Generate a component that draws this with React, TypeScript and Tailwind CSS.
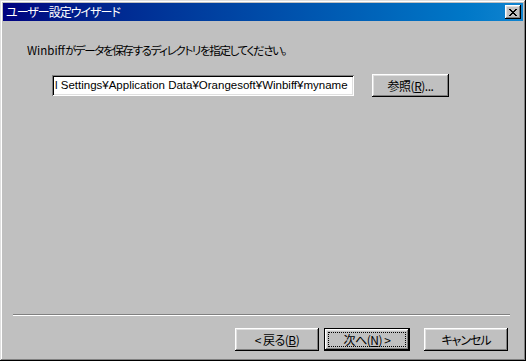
import React from "react";

const font = "font-['MS_UI_Gothic','Noto_Sans_CJK_JP',sans-serif] [font-feature-settings:'palt']";

function Btn({ children, focused = false, w = "w-[84px]" }: { children: React.ReactNode; focused?: boolean; w?: string }) {
  const bevel =
    "shadow-[inset_-1px_-1px_#000,inset_1px_1px_#fff,inset_-2px_-2px_#808080,inset_2px_2px_#dfdfdf]";
  if (focused) {
    return (
      <div className={`${w} h-[23px] border border-black bg-[#c0c0c0]`}>
        <div className={`w-full h-full ${bevel} flex items-center justify-center p-[3px]`}>
          <div className="w-full h-full border border-dotted border-black flex items-center justify-center text-[12px] text-black leading-none tracking-[-0.5px]">
            {children}
          </div>
        </div>
      </div>
    );
  }
  return (
    <div className={`${w} h-[23px] bg-[#c0c0c0] ${bevel} flex items-center justify-center text-[12px] text-black leading-none tracking-[-0.5px]`}>
      {children}
    </div>
  );
}

export default function App() {
  return (
    <div
      className={`w-[526px] h-[361px] bg-[#c0c0c0] flex flex-col p-[3px] ${font} shadow-[inset_-1px_-1px_#000,inset_1px_1px_#dfdfdf,inset_-2px_-2px_#808080,inset_2px_2px_#fff]`}
    >
      <div className="h-[18px] flex items-center justify-between pl-[3px] pr-[2px] bg-gradient-to-r from-[#000080] to-[#1084d0]">
        <span className="text-white text-[12px] leading-none tracking-[-1px]">ユーザー設定ウイザード</span>
        <div className="w-[16px] h-[14px] bg-[#c0c0c0] shadow-[inset_-1px_-1px_#000,inset_1px_1px_#fff,inset_-2px_-2px_#808080,inset_2px_2px_#dfdfdf] flex items-center justify-center">
          <svg width="8" height="7" viewBox="0 0 8 7" shapeRendering="crispEdges">
            <path d="M0 0h2v1H0zM6 0h2v1H6zM1 1h2v1H1zM5 1h2v1H5zM2 2h4v1H2zM3 3h2v1H3zM2 4h4v1H2zM1 5h2v1H1zM5 5h2v1H5zM0 6h2v1H0zM6 6h2v1H6z" fill="#000" />
          </svg>
        </div>
      </div>

      <div className="flex-1 flex flex-col pl-[10px] pr-[15px]">
        <div className="mt-[22px] ml-[14px] text-[11.5px] text-black leading-[14px]">
          Winbiff<span className="tracking-[-1.35px]">がデータを保存するディレクトリを指定してください。</span>
        </div>

        <div className="mt-[17px] ml-[39px] flex items-center">
          <div className="w-[302px] h-[21px] bg-white shadow-[inset_1px_1px_#808080,inset_-1px_-1px_#fff,inset_2px_2px_#000,inset_-2px_-2px_#dfdfdf] flex items-center pl-[3px] overflow-hidden">
            <span className="text-[11.5px] text-black leading-none whitespace-nowrap font-['Liberation_Sans','Noto_Sans_CJK_JP',sans-serif]">
              l Settings¥Application Data¥Orangesoft¥Winbiff¥myname
            </span>
          </div>
          <div className="ml-[18px]">
            <Btn w="w-[77px]">参照(<span className="underline">R</span>)...</Btn>
          </div>
        </div>

        <div className="flex-1" />

        <div className="h-[2px] border-t border-[#808080] border-b-white border-b mr-[-2px]" />

        <div className="mt-[12px] mb-[7px] flex justify-end">
          <Btn>&lt; 戻る(<span className="underline">B</span>)</Btn>
          <div className="ml-[5px]">
            <Btn focused w="w-[86px]">次へ(<span className="underline">N</span>) &gt;</Btn>
          </div>
          <div className="ml-[14px]">
            <Btn><span className="tracking-[-1px]">キャンセル</span></Btn>
          </div>
        </div>
      </div>
    </div>
  );
}
